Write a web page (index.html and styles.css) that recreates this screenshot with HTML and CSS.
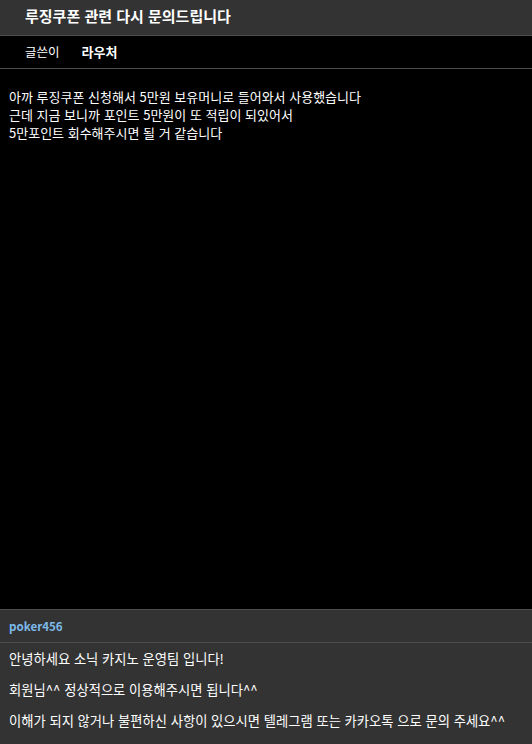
FILE: index.html
```html
<!DOCTYPE html>
<html lang="ko">
<head>
<meta charset="utf-8">
<link rel="stylesheet" href="styles.css">
</head>
<body>
<div class="page">
  <header class="header">
    <h1 class="title">루징쿠폰 관련 다시 문의드립니다</h1>
  </header>
  <nav class="tabs">
    <span class="tab">글쓴이</span>
    <span class="tab tab-active">라우처</span>
  </nav>
  <main class="content">
    <p class="post-line">아까 루징쿠폰 신청해서 5만원 보유머니로 들어와서 사용했습니다</p>
    <p class="post-line">근데 지금 보니까 포인트 5만원이 또 적립이 되있어서</p>
    <p class="post-line">5만포인트 회수해주시면 될 거 같습니다</p>
  </main>
  <section class="reply">
    <div class="reply-head"><span class="reply-user">poker456</span></div>
    <div class="reply-body">
      <p class="reply-line">안녕하세요 소닉 카지노 운영팀 입니다!</p>
      <p class="reply-line">회원님^^ 정상적으로 이용해주시면 됩니다^^</p>
      <p class="reply-line">이해가 되지 않거나 불편하신 사항이 있으시면 텔레그램 또는 카카오톡 으로 문의 주세요^^</p>
    </div>
  </section>
</div>
</body>
</html>
```

FILE: styles.css
```css
* { box-sizing: border-box; }
html, body {
  margin: 0;
  padding: 0;
  background: #000;
  color: #fff;
  font-family: "Noto Sans CJK KR", "Noto Sans", sans-serif;
}
.page {
  display: flex;
  flex-direction: column;
  min-height: 744px;
}
.header {
  height: 36px;
  background: #333333;
  border-bottom: 1px solid #4d4d4d;
  display: flex;
  align-items: center;
  padding: 0 0 4px 25px;
}
.title {
  margin: 0;
  font-size: 15px;
  font-weight: bold;
  line-height: 20px;
  color: #fff;
}
.tabs {
  height: 33px;
  background: #000;
  border-bottom: 1px solid #4d4d4d;
  display: flex;
  align-items: center;
  gap: 22px;
  padding: 0 0 0 25px;
}
.tab {
  font-size: 12.5px;
  line-height: 16px;
  color: #fff;
}
.tab-active {
  font-weight: bold;
  font-size: 13px;
}
.content {
  flex: 1;
  padding: 19px 9px 0 9px;
}
.post-line {
  margin: 0;
  font-size: 13px;
  line-height: 18px;
  color: #fff;
}
.reply {
  background: #333333;
  border-top: 1px solid #4d4d4d;
}
.reply-head {
  height: 33px;
  border-bottom: 1px solid #4d4d4d;
  display: flex;
  align-items: center;
  padding-left: 9px;
}
.reply-user {
  font-size: 11.6px;
  font-weight: bold;
  color: #7db9ea;
}
.reply-body {
  padding: 6px 9px 14px 9px;
  display: flex;
  flex-direction: column;
  gap: 12px;
}
.reply-line {
  margin: 0;
  font-size: 13.3px;
  line-height: 19px;
  color: #fff;
}
```
